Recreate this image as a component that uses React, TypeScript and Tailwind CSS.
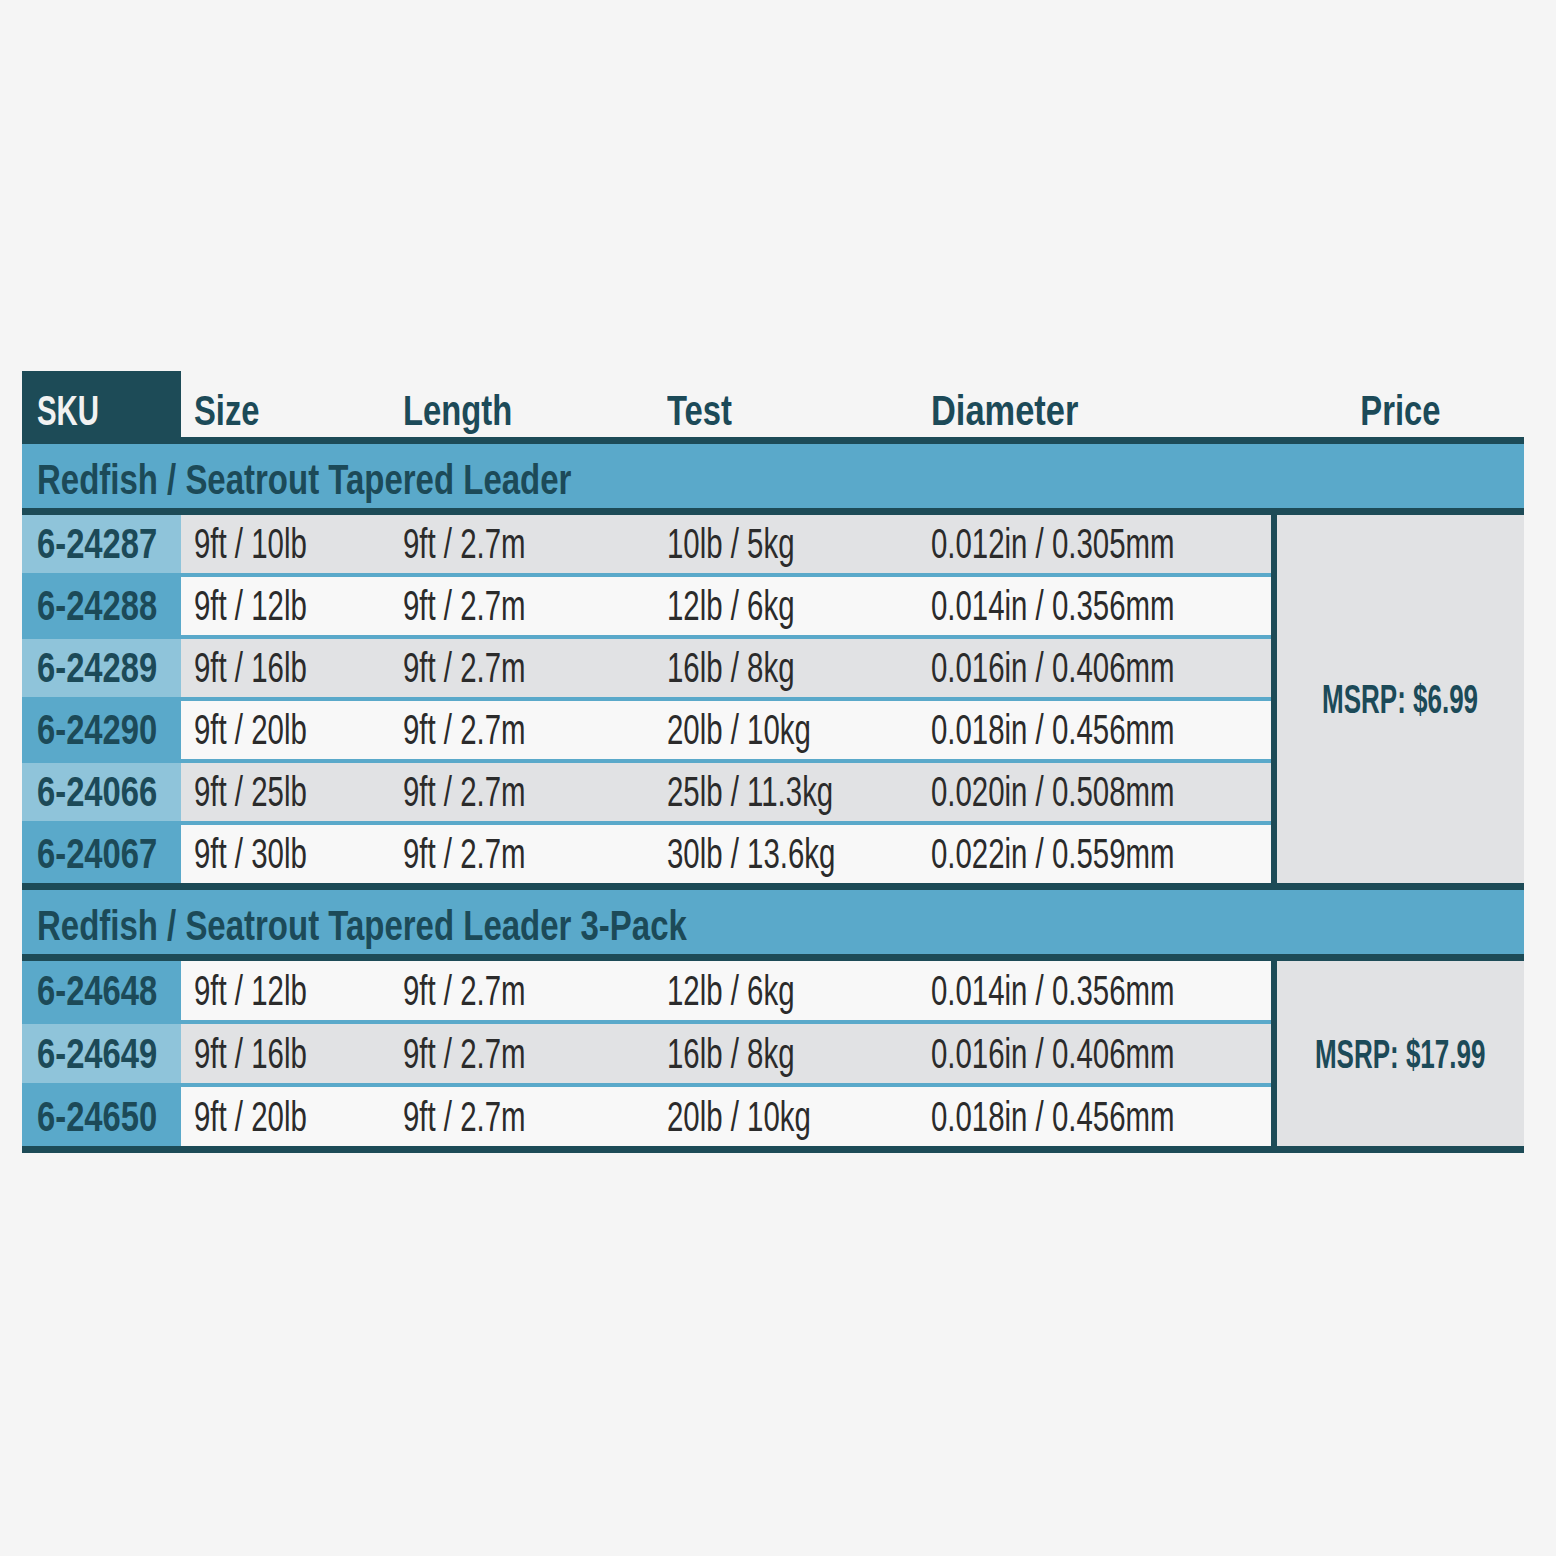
import { Fragment, type ReactNode } from "react";
import clsx from "clsx";
import { twMerge } from "tailwind-merge";

type Row = { sku: string; size: string; length: string; test: string; dia: string };

const taperedLeaders: Row[] = [
  { sku: "6-24287", size: "9ft / 10lb", length: "9ft / 2.7m", test: "10lb / 5kg", dia: "0.012in / 0.305mm" },
  { sku: "6-24288", size: "9ft / 12lb", length: "9ft / 2.7m", test: "12lb / 6kg", dia: "0.014in / 0.356mm" },
  { sku: "6-24289", size: "9ft / 16lb", length: "9ft / 2.7m", test: "16lb / 8kg", dia: "0.016in / 0.406mm" },
  { sku: "6-24290", size: "9ft / 20lb", length: "9ft / 2.7m", test: "20lb / 10kg", dia: "0.018in / 0.456mm" },
  { sku: "6-24066", size: "9ft / 25lb", length: "9ft / 2.7m", test: "25lb / 11.3kg", dia: "0.020in / 0.508mm" },
  { sku: "6-24067", size: "9ft / 30lb", length: "9ft / 2.7m", test: "30lb / 13.6kg", dia: "0.022in / 0.559mm" },
];

const threePacks: Row[] = [
  { sku: "6-24648", size: "9ft / 12lb", length: "9ft / 2.7m", test: "12lb / 6kg", dia: "0.014in / 0.356mm" },
  { sku: "6-24649", size: "9ft / 16lb", length: "9ft / 2.7m", test: "16lb / 8kg", dia: "0.016in / 0.406mm" },
  { sku: "6-24650", size: "9ft / 20lb", length: "9ft / 2.7m", test: "20lb / 10kg", dia: "0.018in / 0.456mm" },
];

// condensed look: the installed fonts have no condensed cut, so squeeze horizontally
function Cond({ children, bold, center, className }: { children: ReactNode; bold?: boolean; center?: boolean; className?: string }) {
  return (
    <span
      className={twMerge(
        "inline-block whitespace-nowrap text-[42px] leading-none",
        bold ? "font-bold text-[#1c4a58] scale-x-[0.78]" : "font-normal text-[#2b2b2b] scale-x-[0.7]",
        center ? "origin-center" : "origin-left",
        className
      )}
    >
      {children}
    </span>
  );
}

const dataCols = "grid grid-cols-[159px_209px_264px_264px_353px]";

function Section({ title, rows, price, startGray, rowH }: { title: string; rows: Row[]; price: string; startGray: boolean; rowH: string }) {
  return (
    <>
      <div className="h-[64px] bg-[#5aa9ca] flex items-center pl-[15px] pt-2">
        <Cond bold className="scale-x-[0.785]">{title}</Cond>
      </div>
      <div className="h-[7px] bg-[#1d4b57]" />
      <div className="flex">
        <div className="w-[1249px] shrink-0 flex flex-col">
          {rows.map((r, i) => {
            const gray = (i % 2 === 0) === startGray;
            return (
              <Fragment key={r.sku}>
                {i > 0 && <div className="h-[4px] bg-[#5aa9ca]" />}
                <div className={clsx(dataCols, rowH, gray ? "bg-[#e1e2e4]" : "bg-[#f8f8f8]")}>
                  <div className={clsx("flex items-center pl-[15px]", gray ? "bg-[#8fc4da]" : "bg-[#5aa9ca]")}>
                    <Cond bold>{r.sku}</Cond>
                  </div>
                  <div className="flex items-center pl-[13px]">
                    <Cond>{r.size}</Cond>
                  </div>
                  <div className="flex items-center pl-[13px]">
                    <Cond>{r.length}</Cond>
                  </div>
                  <div className="flex items-center pl-[13px]">
                    <Cond>{r.test}</Cond>
                  </div>
                  <div className="flex items-center pl-[13px]">
                    <Cond>{r.dia}</Cond>
                  </div>
                </div>
              </Fragment>
            );
          })}
        </div>
        <div className="w-[6px] shrink-0 bg-[#1d4b57]" />
        <div className="w-[247px] shrink-0 bg-[#e1e2e4] flex items-center justify-center">
          <Cond bold center className="text-[40px] leading-none scale-x-[0.65] shrink-0">{price}</Cond>
        </div>
      </div>
      <div className="h-[7px] bg-[#1d4b57]" />
    </>
  );
}

export default function App() {
  return (
    <div className="min-h-[1556px] bg-[#f5f5f5] pt-[371px] pl-[22px] font-['Liberation_Sans',Arial,sans-serif]">
      <div className="w-[1502px]">
        <div className="grid grid-cols-[159px_209px_264px_264px_353px_6px_247px] h-[66px]">
          <div className="bg-[#1d4b57] flex items-end pb-[5px] pl-[15px]">
            <Cond bold className="text-[#f2f2f2] scale-x-[0.7]">SKU</Cond>
          </div>
          <div className="flex items-end pb-[5px] pl-[13px]">
            <Cond bold>Size</Cond>
          </div>
          <div className="flex items-end pb-[5px] pl-[13px]">
            <Cond bold>Length</Cond>
          </div>
          <div className="flex items-end pb-[5px] pl-[13px]">
            <Cond bold>Test</Cond>
          </div>
          <div className="flex items-end pb-[5px] pl-[13px]">
            <Cond bold className="scale-x-[0.82]">Diameter</Cond>
          </div>
          <div />
          <div className="flex items-end justify-center pb-[5px]">
            <Cond bold center>Price</Cond>
          </div>
        </div>
        <div className="h-[7px] bg-[#1d4b57]" />
        <Section title="Redfish / Seatrout Tapered Leader" rows={taperedLeaders} price="MSRP: $6.99" startGray rowH="h-[58px]" />
        <Section title="Redfish / Seatrout Tapered Leader 3-Pack" rows={threePacks} price="MSRP: $17.99" startGray={false} rowH="h-[59px]" />
      </div>
    </div>
  );
}
